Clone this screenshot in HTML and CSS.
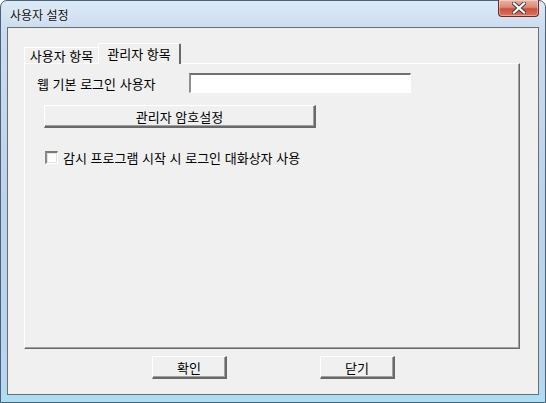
FILE: index.html
```html
<!DOCTYPE html>
<html lang="ko">
<head>
    <meta charset="UTF-8">
    <title>사용자 설정</title>
    <link rel="stylesheet" href="styles.css">
</head>
<body>

    <div class="window">
        <!-- Title bar -->
        <div class="titlebar">
            <span class="title">사용자 설정</span>
            <div class="close-btn">
                <svg width="14" height="12" viewBox="0 0 14 12">
                    <path d="M2 1.5 L12 10.5 M12 1.5 L2 10.5" stroke="#3b3b3b" stroke-width="4" stroke-linecap="square"/>
                    <path d="M2 1.5 L12 10.5 M12 1.5 L2 10.5" stroke="#ffffff" stroke-width="2.2" stroke-linecap="square"/>
                </svg>
            </div>
        </div>

        <div class="client">
            <!-- Tabs -->
            <div class="tabs">
                <div class="tab-strip">
                    <div class="tab">사용자 항목</div>
                    <div class="tab selected">관리자 항목</div>
                </div>

                <div class="tab-panel">
                    <div class="row">
                        <label class="field-label" for="webUser">웹 기본 로그인 사용자</label>
                        <input type="text" id="webUser" class="field">
                    </div>

                    <button class="btn wide">관리자 암호설정</button>

                    <div class="check-row">
                        <span class="checkbox"></span>
                        <span>감시 프로그램 시작 시 로그인 대화상자 사용</span>
                    </div>
                </div>
            </div>

            <!-- Dialog buttons -->
            <div class="footer">
                <button class="btn small">확인</button>
                <button class="btn small">닫기</button>
            </div>
        </div>
    </div>

</body>
</html>
```

FILE: styles.css
```css
body {
    margin: 0;
    font-family: "Noto Sans CJK KR", "Noto Sans", sans-serif;
    font-size: 12px;
    color: #000;
    background: #fff;
}
.window {
    width: 546px;
    height: 403px;
    box-sizing: border-box;
    border: 1px solid #4d6076;
    border-radius: 7px 7px 0 0;
    background: linear-gradient(to bottom, #dce9f6 0px, #cadcef 30px, #bcd3ec 200px, #b7d6f0 380px, #a9e0f6 403px);
    display: flex;
    flex-direction: column;
}
.titlebar {
    height: 26px;
    display: flex;
    align-items: flex-start;
    padding-left: 9px;
}
.title {
    margin-top: 5px;
    line-height: 18px;
    color: #111;
    text-shadow: 0 0 6px rgba(255,255,255,0.9);
}
.close-btn {
    margin-left: auto;
    margin-right: 6px;
    margin-top: -1px;
    width: 41px;
    height: 17px;
    box-sizing: border-box;
    border: 1px solid #6e2a20;
    border-top: none;
    border-radius: 0 0 4px 4px;
    background: linear-gradient(to bottom, #e8b2a6 0%, #dc8a77 45%, #cb513c 55%, #d87562 100%);
    display: flex;
    align-items: center;
    justify-content: center;
    box-shadow: inset 0 0 0 1px rgba(255,255,255,0.35);
}
.client {
    margin: 0 6px 7px 6px;
    flex: 1;
    background: #f0f0f0;
    border: 1px solid #6d6d6d;
    display: flex;
    flex-direction: column;
    font-size: 13px;
}
.tabs {
    margin: 15px 0 0 16px;
    width: 496px;
}
.tab-strip {
    display: flex;
    align-items: flex-end;
    height: 20px;
}
.tab {
    width: 76px;
    height: 16px;
    box-sizing: border-box;
    border-top: 1px solid #fff;
    border-left: 1px solid #fff;
    border-right: 2px solid #8a8a8a;
    border-radius: 2px 2px 0 0;
    text-align: center;
    line-height: 15px;
    white-space: nowrap;
}
.tab.selected {
    position: relative;
    z-index: 1;
    width: 83px;
    height: 21px;
    margin-left: -2px;
    margin-bottom: -1px;
    background: #f0f0f0;
    border-right: 2px solid #696969;
    line-height: 19px;
}
.tab-panel {
    height: 286px;
    box-sizing: border-box;
    border-top: 1px solid #fff;
    border-left: 1px solid #fff;
    border-right: 1px solid #696969;
    border-bottom: 1px solid #696969;
    box-shadow: inset -1px -1px 0 #a0a0a0;
    padding: 9px 0 0 12px;
}
.row {
    display: flex;
    align-items: center;
    height: 20px;
}
.field-label {
    width: 152px;
    white-space: nowrap;
}
.field {
    width: 222px;
    height: 20px;
    box-sizing: border-box;
    margin: 0;
    padding: 0 3px;
    background: #fff;
    border-style: solid;
    border-width: 2px 1px 1px 2px;
    border-color: #707070 #fff #fff #909090;
    outline: none;
}
.btn {
    font-family: inherit;
    font-size: 13px;
    color: #000;
    background: #f0f0f0;
    padding: 0;
    border-style: solid;
    border-width: 1px 2px 2px 1px;
    border-color: #fff #696969 #696969 #fff;
    box-shadow: inset -1px -1px 0 #a0a0a0;
}
.btn.wide {
    display: block;
    margin: 12px 0 0 7px;
    width: 272px;
    height: 23px;
}
.check-row {
    display: flex;
    align-items: center;
    margin: 23px 0 0 8px;
    height: 13px;
    gap: 5px;
    white-space: nowrap;
}
.checkbox {
    width: 13px;
    height: 13px;
    box-sizing: border-box;
    background: #fff;
    border-style: solid;
    border-width: 2px 1px 1px 2px;
    border-color: #7a7a7a #fff #fff #8a8a8a;
    box-shadow: 0 0 0 1px #e3e3e3 inset;
}
.footer {
    display: flex;
    gap: 93px;
    margin: 7px 0 0 144px;
}
.btn.small {
    width: 75px;
    height: 23px;
}
```
